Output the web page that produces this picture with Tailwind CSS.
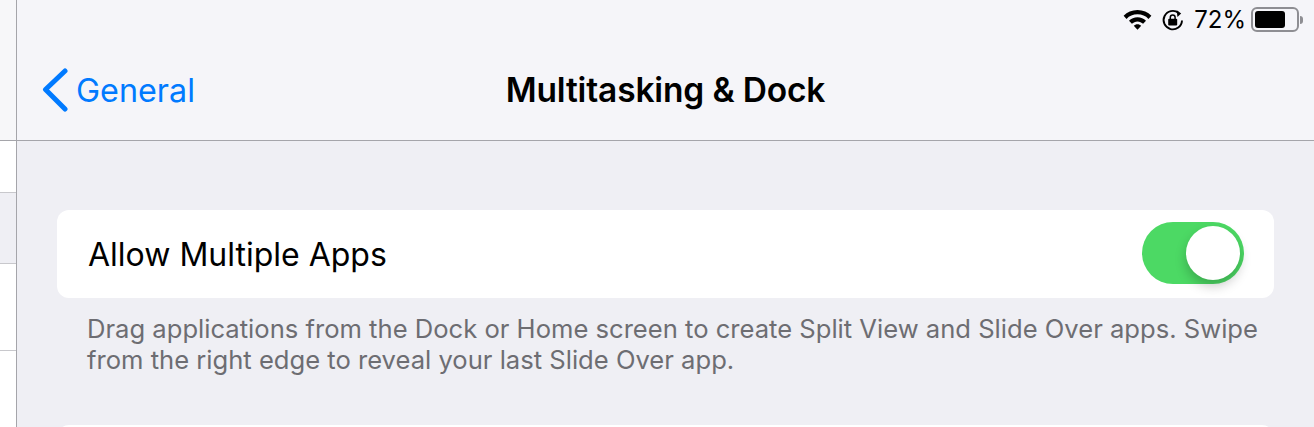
<!DOCTYPE html>
<html lang="en">
<head>
    <meta charset="UTF-8">
    <title>Multitasking &amp; Dock</title>
    <script src="https://cdn.jsdelivr.net/npm/@tailwindcss/browser@4"></script>
</head>
<body class="w-[1314px] h-[427px] overflow-hidden bg-[#efeff4] font-['Inter','Liberation_Sans',sans-serif]">
    <div class="flex h-[427px] overflow-hidden">
        <!-- sidebar sliver -->
        <div class="w-[17px] shrink-0 border-r border-[#a5a5aa] bg-white">
            <div class="h-[141px] bg-[#f7f7f9] border-b border-[#a5a5aa]"></div>
            <div class="h-[52px] border-b border-[#c8c8cc]"></div>
            <div class="h-[71px] bg-[#efeff4] border-b border-[#c8c8cc]"></div>
            <div class="h-[87px] border-b border-[#c8c8cc]"></div>
        </div>

        <div class="flex-1 min-w-0 h-[427px] overflow-hidden">
            <!-- nav bar -->
            <div class="relative h-[141px] bg-[#f5f5f9] border-b border-[#a5a5aa]">
                <div class="absolute top-0 right-[11px] h-[39px] flex items-center text-black">
                    <svg class="w-[29px] h-[21px] mr-[9px]" viewBox="0 0 28 20"><path d="M14 .8C8.6.8 4 2.9.6 6.4l2.8 3C6.1 6.6 9.8 5 14 5s7.9 1.6 10.6 4.4l2.8-3C24 2.9 19.4.8 14 .8z M14 7.8c-3.2 0-6.1 1.3-8.2 3.4l2.8 3c1.4-1.4 3.3-2.3 5.4-2.3s4 .9 5.4 2.3l2.8-3c-2.1-2.1-5-3.4-8.2-3.4z M14 14.5c-1.4 0-2.7.6-3.6 1.5l3.6 3.8 3.6-3.8c-.9-.9-2.2-1.5-3.6-1.5z" fill="#000"/></svg>
                    <svg class="w-[24px] h-[24px] mr-[9px]" viewBox="0 0 24 24" fill="none"><path d="M21 12.5A9.2 9.2 0 1 1 17.6 5" stroke="#000" stroke-width="1.9"/><path d="M15.8 2.2l4.4 3.2-3.8 3.6z" fill="#000"/><rect x="7.2" y="10.8" width="9" height="6.8" rx="1" fill="#000"/><path d="M9.3 11V9.3a2.4 2.4 0 0 1 4.8 0V11" stroke="#000" stroke-width="1.5"/></svg>
                    <span class="text-[24px] leading-none mr-[5px]">72%</span>
                    <div class="w-[48px] h-[25px] rounded-[6px] border-2 border-[#8e8e93] p-[2px]">
                        <div class="w-[30px] h-full rounded-[3px] bg-black"></div>
                    </div>
                    <div class="w-[3px] h-[8px] ml-[1px] rounded-r-full bg-[#8e8e93]"></div>
                </div>

                <div class="absolute left-0 right-0 top-[40px] h-[102px] flex items-center justify-center">
                    <h1 class="text-[33.5px] leading-none font-semibold tracking-[-0.15px] text-black">Multitasking &amp; Dock</h1>
                </div>

                <div class="absolute left-[25px] top-[68px] flex items-center text-[#007aff]">
                    <svg class="w-[26px] h-[44px]" viewBox="0 0 26 44" fill="none"><path d="M23 3 L3.5 21.5 L23 41" stroke="#007aff" stroke-width="5" stroke-linecap="round" stroke-linejoin="round"/></svg>
                    <span class="ml-[8px] mt-[2px] text-[32.3px] leading-none">General</span>
                </div>
            </div>

            <!-- content -->
            <div class="pt-[69px] pl-[40px] pr-[40px]">
                <div class="h-[88px] rounded-[12px] bg-white flex items-center justify-between pl-[31px] pr-[30px]">
                    <span class="mt-[2px] text-[32px] leading-none text-black">Allow Multiple Apps</span>
                    <div class="relative w-[102px] h-[62px] mb-[2px] rounded-full bg-[#4cd964]">
                        <div class="absolute right-[4px] top-[4px] w-[54px] h-[54px] rounded-full bg-white shadow-[0_6px_12px_rgba(0,0,0,0.22)]"></div>
                    </div>
                </div>
                <p class="mt-[15px] pl-[30px] text-[25.6px] leading-[31px] text-[#6d6d72]">Drag applications from the Dock or Home screen to create Split View and Slide Over apps. Swipe from the right edge to reveal your last Slide Over app.</p>
                <div class="mt-[50px] h-[88px] rounded-[12px] bg-white"></div>
            </div>
        </div>
    </div>
</body>
</html>
